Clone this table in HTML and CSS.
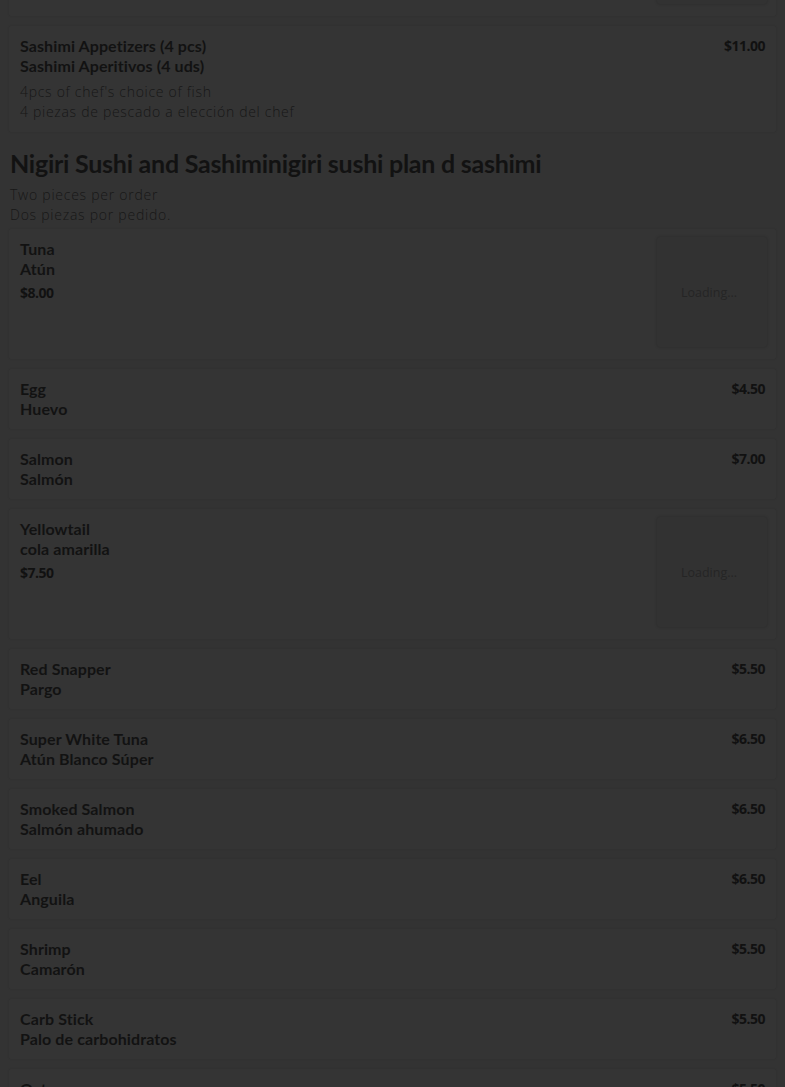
FILE: index.html
```html
<!DOCTYPE html>
<html lang="en">
<head>
<meta charset="utf-8">
<title>Menu</title>
<link rel="stylesheet" href="styles.css">
</head>
<body>
<main class="menu">
  <div class="items items-prev">
    <article class="card card-img card-prev">
      <div class="thumb"></div>
    </article>
    <article class="card">
      <div class="info">
        <div class="name">Sashimi Appetizers (4 pcs)</div>
        <div class="name">Sashimi Aperitivos (4 uds)</div>
        <p class="desc">4pcs of chef's choice of fish<br>4 piezas de pescado a elección del chef</p>
      </div>
      <div class="price">$11.00</div>
    </article>
  </div>

  <section class="section">
    <h2 class="section-title">Nigiri Sushi and Sashiminigiri sushi plan d sashimi</h2>
    <p class="section-desc">Two pieces per order<br>Dos piezas por pedido.</p>
    <div class="items">
      <article class="card card-img">
        <div class="info">
          <div class="name">Tuna</div>
          <div class="name">Atún</div>
          <div class="price price-inline">$8.00</div>
        </div>
        <div class="thumb"><span>Loading...</span></div>
      </article>
      <article class="card">
        <div class="info"><div class="name">Egg</div><div class="name">Huevo</div></div>
        <div class="price">$4.50</div>
      </article>
      <article class="card">
        <div class="info"><div class="name">Salmon</div><div class="name">Salmón</div></div>
        <div class="price">$7.00</div>
      </article>
      <article class="card card-img">
        <div class="info">
          <div class="name">Yellowtail</div>
          <div class="name">cola amarilla</div>
          <div class="price price-inline">$7.50</div>
        </div>
        <div class="thumb"><span>Loading...</span></div>
      </article>
      <article class="card">
        <div class="info"><div class="name">Red Snapper</div><div class="name">Pargo</div></div>
        <div class="price">$5.50</div>
      </article>
      <article class="card">
        <div class="info"><div class="name">Super White Tuna</div><div class="name">Atún Blanco Súper</div></div>
        <div class="price">$6.50</div>
      </article>
      <article class="card">
        <div class="info"><div class="name">Smoked Salmon</div><div class="name">Salmón ahumado</div></div>
        <div class="price">$6.50</div>
      </article>
      <article class="card">
        <div class="info"><div class="name">Eel</div><div class="name">Anguila</div></div>
        <div class="price">$6.50</div>
      </article>
      <article class="card">
        <div class="info"><div class="name">Shrimp</div><div class="name">Camarón</div></div>
        <div class="price">$5.50</div>
      </article>
      <article class="card">
        <div class="info"><div class="name">Carb Stick</div><div class="name">Palo de carbohidratos</div></div>
        <div class="price">$5.50</div>
      </article>
      <article class="card">
        <div class="info"><div class="name">Octopus</div><div class="name">Pulpo</div></div>
        <div class="price">$5.50</div>
      </article>
    </div>
  </section>
</main>
</body>
</html>
```

FILE: styles.css
```css
html, body {
  margin: 0;
  padding: 0;
}
body {
  background: #333333;
  color: #121212;
  font-family: "Lato", "Noto Sans", sans-serif;
  overflow: hidden;
}
.menu {
  padding: 0 9px;
  margin-top: -114px;
}
.items {
  display: flex;
  flex-direction: column;
  gap: 10px;
}
.card {
  display: flex;
  justify-content: space-between;
  align-items: flex-start;
  padding: 10px 11px;
  background: #343434;
  border-radius: 2px;
  box-shadow: 0 0 2px rgba(0, 0, 0, 0.12);
}
.card-img {
  padding: 10px 9px 12px 11px;
}
.card-prev {
  justify-content: flex-end;
}
.info {
  display: flex;
  flex-direction: column;
}
.name {
  font-weight: 700;
  font-size: 16px;
  line-height: 20px;
  color: #121212;
  letter-spacing: 0.1px;
}
.desc {
  margin: 6px 0 0;
  font-family: "Open Sans", "Noto Sans", sans-serif;
  font-weight: 300;
  font-size: 14px;
  line-height: 20px;
  color: #171717;
  letter-spacing: 0.7px;
}
.price {
  font-family: "Open Sans", "Noto Sans", sans-serif;
  font-weight: 700;
  font-size: 14px;
  line-height: 20px;
  color: #111111;
  letter-spacing: -0.5px;
}
.price-inline {
  margin-top: 4px;
}
.thumb {
  width: 110px;
  height: 110px;
  margin-top: -2px;
  display: flex;
  align-items: center;
  justify-content: center;
  background: #323232;
  border-radius: 3px;
  box-shadow: 0 0 3px rgba(0, 0, 0, 0.2);
  font-family: "Open Sans", "Noto Sans", sans-serif;
  font-size: 12.5px;
  color: #252525;
  padding-right: 6px;
  box-sizing: border-box;
}
.section {
  margin-top: 16px;
}
.section-title {
  margin: 0 0 0 1px;
  font-size: 25px;
  line-height: 30px;
  font-weight: 700;
  color: #121212;
  letter-spacing: -0.25px;
}
.section-desc {
  margin: 7px 0 4px 1px;
  font-family: "Open Sans", "Noto Sans", sans-serif;
  font-weight: 300;
  font-size: 14px;
  line-height: 20px;
  color: #171717;
  letter-spacing: 0.75px;
}
```
